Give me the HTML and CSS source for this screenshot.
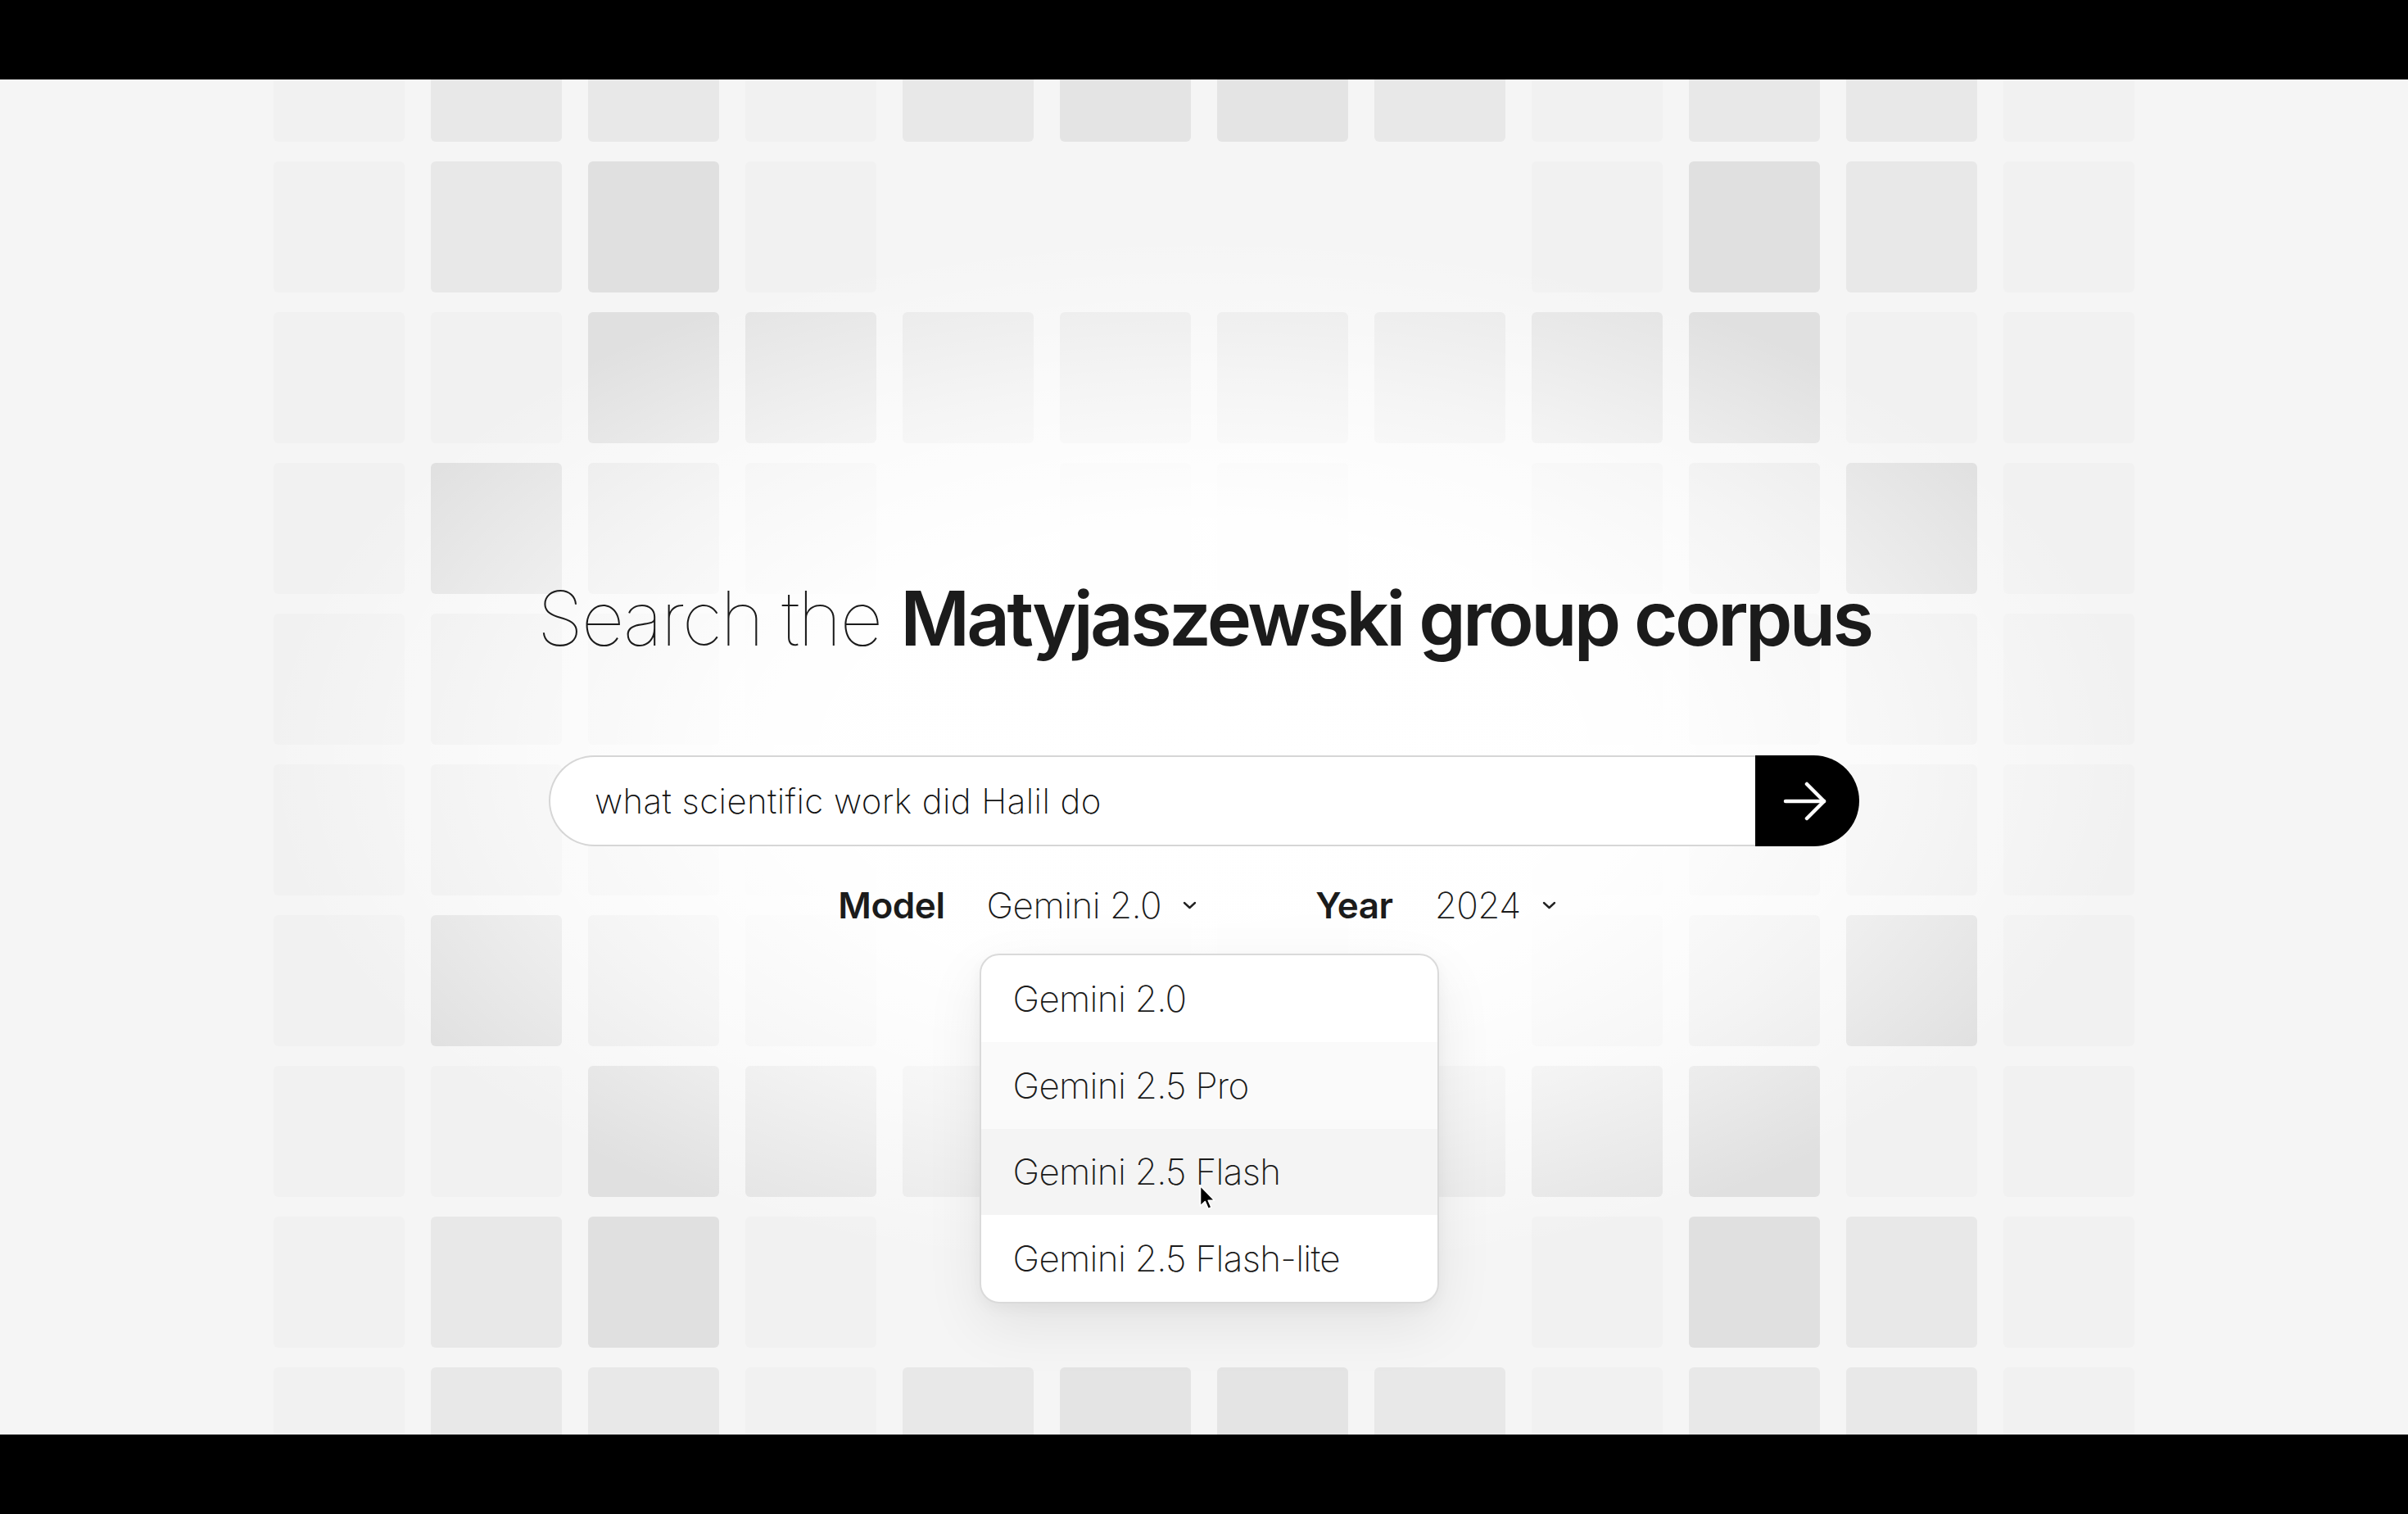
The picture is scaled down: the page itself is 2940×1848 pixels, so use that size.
FILE: index.html
```html
<!DOCTYPE html>
<html lang="en">
<head>
<meta charset="utf-8">
<title>Search the Matyjaszewski group corpus</title>
<link rel="stylesheet" href="styles.css">
</head>
<body>
<div class="screen">
  <div class="tiles">
    <div class="tile t1"></div><div class="tile t3"></div><div class="tile t3"></div><div class="tile t1"></div><div class="tile t3"></div><div class="tile t4"></div><div class="tile t4"></div><div class="tile t3"></div><div class="tile t1"></div><div class="tile t3"></div><div class="tile t3"></div><div class="tile t1"></div>
    <div class="tile t1"></div><div class="tile t3"></div><div class="tile t5"></div><div class="tile t1"></div><div class="tile t0"></div><div class="tile t0"></div><div class="tile t0"></div><div class="tile t0"></div><div class="tile t1"></div><div class="tile t5"></div><div class="tile t3"></div><div class="tile t1"></div>
    <div class="tile t1"></div><div class="tile t1"></div><div class="tile t5"></div><div class="tile t4"></div><div class="tile t3"></div><div class="tile t3"></div><div class="tile t3"></div><div class="tile t3"></div><div class="tile t4"></div><div class="tile t5"></div><div class="tile t1"></div><div class="tile t1"></div>
    <div class="tile t1"></div><div class="tile t5"></div><div class="tile t3"></div><div class="tile t2"></div><div class="tile t0"></div><div class="tile t2"></div><div class="tile t2"></div><div class="tile t0"></div><div class="tile t2"></div><div class="tile t3"></div><div class="tile t5"></div><div class="tile t1"></div>
    <div class="tile t1"></div><div class="tile t2"></div><div class="tile t2"></div><div class="tile t1"></div><div class="tile t0"></div><div class="tile t1"></div><div class="tile t1"></div><div class="tile t0"></div><div class="tile t1"></div><div class="tile t2"></div><div class="tile t2"></div><div class="tile t1"></div>
    <div class="tile t1"></div><div class="tile t2"></div><div class="tile t2"></div><div class="tile t1"></div><div class="tile t0"></div><div class="tile t1"></div><div class="tile t1"></div><div class="tile t0"></div><div class="tile t1"></div><div class="tile t2"></div><div class="tile t2"></div><div class="tile t1"></div>
    <div class="tile t1"></div><div class="tile t5"></div><div class="tile t3"></div><div class="tile t2"></div><div class="tile t0"></div><div class="tile t2"></div><div class="tile t2"></div><div class="tile t0"></div><div class="tile t2"></div><div class="tile t3"></div><div class="tile t5"></div><div class="tile t1"></div>
    <div class="tile t1"></div><div class="tile t1"></div><div class="tile t5"></div><div class="tile t4"></div><div class="tile t3"></div><div class="tile t3"></div><div class="tile t3"></div><div class="tile t3"></div><div class="tile t4"></div><div class="tile t5"></div><div class="tile t1"></div><div class="tile t1"></div>
    <div class="tile t1"></div><div class="tile t3"></div><div class="tile t5"></div><div class="tile t1"></div><div class="tile t0"></div><div class="tile t0"></div><div class="tile t0"></div><div class="tile t0"></div><div class="tile t1"></div><div class="tile t5"></div><div class="tile t3"></div><div class="tile t1"></div>
    <div class="tile t1"></div><div class="tile t3"></div><div class="tile t3"></div><div class="tile t1"></div><div class="tile t3"></div><div class="tile t4"></div><div class="tile t4"></div><div class="tile t3"></div><div class="tile t1"></div><div class="tile t3"></div><div class="tile t3"></div><div class="tile t1"></div>
  </div>
  <div class="glow"></div>

  <main class="hero">
    <h1 class="title"><span class="title-light">Search the </span><strong class="title-bold">Matyjaszewski group corpus</strong></h1>

    <form class="search">
      <div class="search-input">what scientific work did Halil do</div>
      <button class="search-go" type="button" aria-label="Search">
        <svg class="arrow" width="56" height="48" viewBox="0 0 56 48" fill="none" stroke="#fff" stroke-width="4.5" stroke-linecap="round" stroke-linejoin="round"><path d="M4 24H51"/><path d="M30 3L51 24L30 45"/></svg>
      </button>
    </form>

    <div class="filters">
      <div class="filter">
        <span class="filter-label">Model</span>
        <div class="select">
          <span class="select-value">Gemini 2.0</span>
          <svg class="chevron" width="17" height="10" viewBox="0 0 17 10" fill="none" stroke="#222" stroke-width="2.4" stroke-linecap="round" stroke-linejoin="round"><path d="M2 2L8.5 8L15 2"/></svg>
          <ul class="menu">
            <li class="menu-item">Gemini 2.0</li>
            <li class="menu-item menu-item-faint">Gemini 2.5 Pro</li>
            <li class="menu-item menu-item-hover">Gemini 2.5 Flash</li>
            <li class="menu-item">Gemini 2.5 Flash-lite</li>
          </ul>
        </div>
      </div>
      <div class="filter">
        <span class="filter-label">Year</span>
        <div class="select">
          <span class="select-value">2024</span>
          <svg class="chevron" width="17" height="10" viewBox="0 0 17 10" fill="none" stroke="#222" stroke-width="2.4" stroke-linecap="round" stroke-linejoin="round"><path d="M2 2L8.5 8L15 2"/></svg>
        </div>
      </div>
    </div>
  </main>

  <svg class="cursor" width="20" height="32" viewBox="0 0 20 32"><path d="M1.5 1.5V26L7.3 20.6L11.2 29.5L15 27.8L11.2 19.2H18.8Z" fill="#000" stroke="#fff" stroke-width="1.6" stroke-linejoin="round"/></svg>
</div>
</body>
</html>
```

FILE: styles.css
```css
html, body {
  margin: 0;
  padding: 0;
}

body {
  width: 2940px;
  height: 1848px;
  overflow: hidden;
  background: #000;
  font-family: Inter, "Noto Sans", "Liberation Sans", sans-serif;
  color: #1b1b1b;
}

.screen {
  position: relative;
  margin-top: 97px;
  height: 1654px;
  background: #f5f5f5;
  overflow: hidden;
}

/* background tile pattern */
.tiles {
  position: absolute;
  top: -84px;
  left: 334px;
  display: grid;
  grid-template-columns: repeat(12, 160px);
  grid-auto-rows: 160px;
  column-gap: 32px;
  row-gap: 24px;
}

.tile {
  border-radius: 6px;
}

.t0 { background: transparent; }
.t1 { background: #f1f1f1; }
.t2 { background: #ededed; }
.t3 { background: #e8e8e8; }
.t4 { background: #e4e4e4; }
.t5 { background: #e0e0e0; }

.glow {
  position: absolute;
  inset: 0;
  background: radial-gradient(ellipse 1150px 640px at 1470px 827px,
    #ffffff 0%,
    rgba(255, 255, 255, 0.96) 45%,
    rgba(255, 255, 255, 0.55) 72%,
    rgba(255, 255, 255, 0) 100%);
}

/* hero content */
.hero {
  position: relative;
  display: flex;
  flex-direction: column;
  align-items: center;
  padding-top: 612px;
}

.title {
  margin: 0;
  font-size: 92px;
  line-height: 92px;
  white-space: nowrap;
  color: #1b1b1b;
}

.title-light {
  font-weight: 100;
  letter-spacing: -0.026em;
}

.title-bold {
  font-weight: 600;
  letter-spacing: -0.04em;
}

.search {
  display: flex;
  width: 1600px;
  height: 111px;
  margin: 121px 0 0;
}

.search-input {
  flex: 1;
  display: flex;
  align-items: center;
  box-sizing: border-box;
  padding-left: 54px;
  background: #fff;
  border: 2px solid #d6d6d6;
  border-right: none;
  border-radius: 56px 0 0 56px;
  font-size: 42px;
  font-weight: 250;
  letter-spacing: 0.01em;
  color: #111;
}

.search-go {
  width: 127px;
  border: none;
  padding: 0 6px 0 0;
  background: #000;
  border-radius: 0 56px 56px 0;
  display: flex;
  align-items: center;
  justify-content: center;
}

.filters {
  display: flex;
  gap: 145px;
  margin-top: 50px;
  padding-right: 17px;
}

.filter {
  display: flex;
  align-items: center;
  gap: 51px;
  font-size: 44px;
  line-height: 44px;
}

.filter-label {
  font-weight: 600;
  letter-spacing: -0.01em;
  color: #1b1b1b;
}

.select {
  position: relative;
  display: flex;
  align-items: center;
  gap: 26px;
}

.select-value {
  font-weight: 250;
  letter-spacing: -0.012em;
  color: #1a1a1a;
}

.chevron {
  display: block;
}

.menu {
  position: absolute;
  top: calc(100% + 37px);
  left: -9px;
  width: 561px;
  box-sizing: border-box;
  margin: 0;
  padding: 0;
  list-style: none;
  background: #fff;
  border: 2px solid #dadada;
  border-radius: 24px;
  overflow: hidden;
  box-shadow: 0 26px 70px rgba(0, 0, 0, 0.08), 0 6px 18px rgba(0, 0, 0, 0.04);
  z-index: 2;
}

.menu-item {
  display: flex;
  align-items: center;
  height: 105.75px;
  padding-left: 39px;
  font-size: 44px;
  font-weight: 250;
  letter-spacing: -0.016em;
  color: #1a1a1a;
  white-space: nowrap;
}

.menu-item-faint {
  background: #fafafa;
}

.menu-item-hover {
  background: #f4f4f4;
}

.cursor {
  position: absolute;
  left: 1464px;
  top: 1349px;
  z-index: 5;
}
```
